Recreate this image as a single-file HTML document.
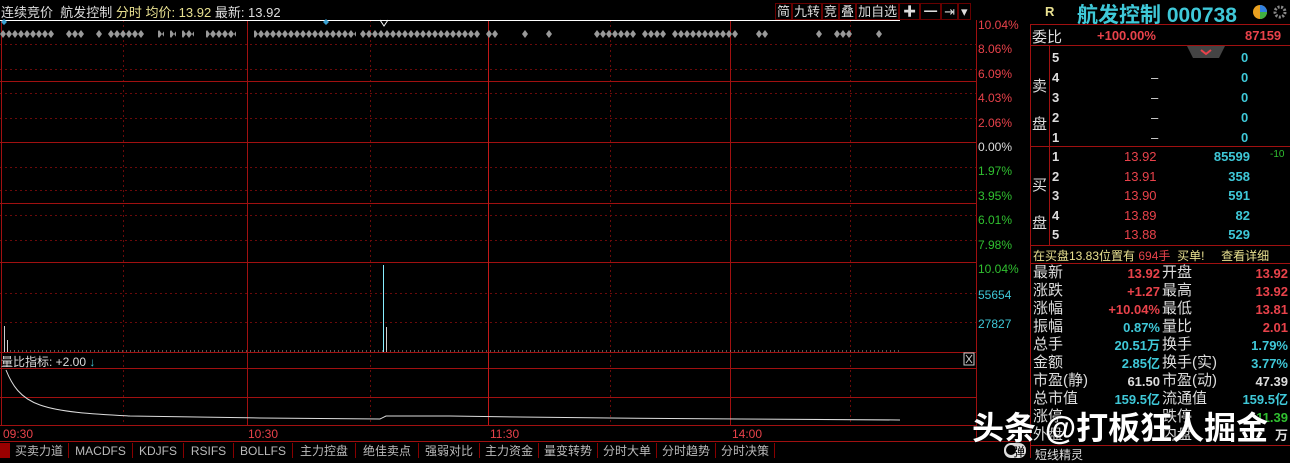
<!DOCTYPE html><html><head><meta charset="utf-8"><style>
body{margin:0;width:1290px;height:458px;background:#000;overflow:hidden;font-family:"Liberation Sans","Noto Sans CJK SC",sans-serif;position:relative}
.a{position:absolute;white-space:nowrap}
.r{color:#e8424a}.c{color:#3fc8d8}.w{color:#ddd}.g{color:#30c030}.y{color:#e8e090}
.tab{position:absolute;top:443px;height:15px;font-size:12px;color:#bbb;border-right:1px solid #800;line-height:16px;text-align:center}
.rp{font-size:13px;position:absolute}
</style></head><body>
<svg class="a" style="left:0;top:0" width="1290" height="458">
<defs><pattern id="dm" x="0" y="30" width="6" height="8" patternUnits="userSpaceOnUse"><path d="M3 0l3 4l-3 4l-3-4z" fill="#999"/></pattern></defs>
<g stroke="#6a0a0a" stroke-width="1">
<line x1="0" y1="44.5" x2="976" y2="44.5" stroke-dasharray="2,3"/>
<line x1="0" y1="69.5" x2="976" y2="69.5" stroke-dasharray="2,3"/>
<line x1="0" y1="93.5" x2="976" y2="93.5" stroke-dasharray="2,3"/>
<line x1="0" y1="118.5" x2="976" y2="118.5" stroke-dasharray="2,3"/>
<line x1="0" y1="167.5" x2="976" y2="167.5" stroke-dasharray="2,3"/>
<line x1="0" y1="190.5" x2="976" y2="190.5" stroke-dasharray="2,3"/>
<line x1="0" y1="215.5" x2="976" y2="215.5" stroke-dasharray="2,3"/>
<line x1="0" y1="240.5" x2="976" y2="240.5" stroke-dasharray="2,3"/>
<line x1="0" y1="293.5" x2="976" y2="293.5" stroke-dasharray="2,3"/>
<line x1="0" y1="322.5" x2="976" y2="322.5" stroke-dasharray="2,3"/>
<line x1="123.5" y1="20" x2="123.5" y2="425" stroke-dasharray="2,3"/>
<line x1="370.5" y1="20" x2="370.5" y2="425" stroke-dasharray="2,3"/>
<line x1="610.5" y1="20" x2="610.5" y2="425" stroke-dasharray="2,3"/>
<line x1="850.5" y1="20" x2="850.5" y2="425" stroke-dasharray="2,3"/>
</g>
<g stroke="#a01010" stroke-width="1">
<line x1="0" y1="81.5" x2="976" y2="81.5"/>
<line x1="0" y1="142.5" x2="976" y2="142.5"/>
<line x1="0" y1="203.5" x2="976" y2="203.5"/>
<line x1="0" y1="262.5" x2="976" y2="262.5"/>
<line x1="0" y1="352.5" x2="976" y2="352.5"/>
<line x1="0" y1="368.5" x2="976" y2="368.5"/>
<line x1="0" y1="397.5" x2="976" y2="397.5"/>
<line x1="0" y1="425.5" x2="976" y2="425.5"/>
<line x1="0" y1="441.5" x2="1030" y2="441.5"/>
<line x1="1.5" y1="20" x2="1.5" y2="425"/>
<line x1="247.5" y1="20" x2="247.5" y2="425"/>
<line x1="730.5" y1="20" x2="730.5" y2="425"/>
<line x1="976.5" y1="20" x2="976.5" y2="441"/>
<line x1="1030.5" y1="24" x2="1030.5" y2="458"/>
<line x1="1030" y1="24.5" x2="1290" y2="24.5"/>
<line x1="1030" y1="45.5" x2="1290" y2="45.5"/>
<line x1="1030" y1="146.5" x2="1290" y2="146.5"/>
<line x1="1030" y1="245.5" x2="1290" y2="245.5"/>
<line x1="1030" y1="263.5" x2="1290" y2="263.5"/>
<line x1="1030" y1="445.5" x2="1290" y2="445.5"/>
<line x1="1049.5" y1="46" x2="1049.5" y2="245"/>
</g>
<line x1="488.5" y1="20" x2="488.5" y2="425" stroke="#c01818"/>
<line x1="0" y1="20.5" x2="900" y2="20.5" stroke="#fff"/>
<path d="M380 20l4 6l4-6" fill="none" stroke="#fff"/>
<path d="M4 19l3 3l-3 3l-3-3zM326 19l3 3l-3 3l-3-3z" fill="#3aa0d0"/>
<g fill="url(#dm)">
<rect x="0" y="30" width="54" height="8"/><rect x="66" y="30" width="18" height="8"/><rect x="96" y="30" width="6" height="8"/><rect x="108" y="30" width="36" height="8"/>
<rect x="158" y="30" width="6" height="8"/><rect x="170" y="30" width="6" height="8"/><rect x="182" y="30" width="12" height="8"/><rect x="206" y="30" width="30" height="8"/>
<rect x="254" y="30" width="102" height="8"/><rect x="360" y="30" width="120" height="8"/><rect x="486" y="30" width="12" height="8"/><rect x="522" y="30" width="6" height="8"/><rect x="546" y="30" width="6" height="8"/>
<rect x="594" y="30" width="42" height="8"/><rect x="642" y="30" width="24" height="8"/><rect x="672" y="30" width="66" height="8"/><rect x="756" y="30" width="12" height="8"/>
<rect x="816" y="30" width="6" height="8"/><rect x="834" y="30" width="18" height="8"/><rect x="876" y="30" width="6" height="8"/>
</g>
<g stroke="#ccc" stroke-width="1">
<line x1="4.5" y1="326" x2="4.5" y2="352"/><line x1="7.5" y1="340" x2="7.5" y2="352"/>
<line x1="383.5" y1="265" x2="383.5" y2="352" stroke="#8ef"/><line x1="386.5" y1="327" x2="386.5" y2="352"/>
</g>
<line x1="10" y1="351" x2="900" y2="351" stroke="#aaa" stroke-dasharray="1,3"/>
<path d="M6 370 C12 385 20 398 40 405 S90 414 130 416 L260 418 L380 419 L386 416 L450 416 L520 417 L610 418 L740 419 L900 420" fill="none" stroke="#ddd"/>
<rect x="964" y="353" width="10" height="12" fill="none" stroke="#ccc"/>
<path d="M966 355l6 8M972 355l-6 8" stroke="#ccc"/>
<path d="M1187 46h38l-6 12h-26z" fill="#444"/>
<path d="M1201 50l5 4l5-4" fill="none" stroke="#e8424a" stroke-width="2"/>
<circle cx="1260" cy="12" r="7" fill="#e9a020"/><path d="M1260 12v-7a7 7 0 0 1 7 7z" fill="#3080e0"/><path d="M1260 12h7a7 7 0 0 1-7 7z" fill="#40b040"/>
<circle cx="1280" cy="12" r="5" fill="none" stroke="#888" stroke-width="3" stroke-dasharray="2,1.5"/>
<rect x="1004" y="443" width="22" height="15" rx="7" fill="#ddd"/><circle cx="1011" cy="450" r="5" fill="#000"/>
<rect x="0" y="443" width="10" height="15" fill="#900"/>
</svg>
<div class="a w" style="left:1px;top:2px;font-size:13px">连续竞价&nbsp; 航发控制 <span class="y">分时 均价: 13.92</span> 最新: 13.92</div>
<div class="a w" style="left:775px;top:1px;font-size:13px;word-spacing:0">
<span style="border:1px solid #600;padding:0 1px">简</span><span style="border:1px solid #600;padding:0 1px">九转</span><span style="border:1px solid #600;padding:0 1px">竞</span><span style="border:1px solid #600;padding:0 1px">叠</span><span style="border:1px solid #600;padding:0 1px">加自选</span><span style="border:1px solid #600;padding:0 3px">✚</span><span style="border:1px solid #600;padding:0 3px">━</span><span style="border:1px solid #600;padding:0 2px">⇥</span><span style="border:1px solid #600;padding:0 2px">▾</span></div>
<div class="a r" style="left:978px;top:13px;font-size:12px;line-height:24.4px">10.04%<br>8.06%<br>6.09%<br>4.03%<br>2.06%<br><span class="w">0.00%</span><br><span class="g">1.97%<br>3.95%<br>6.01%<br>7.98%<br>10.04%</span></div>
<div class="a c" style="left:978px;top:288px;font-size:12px">55654</div>
<div class="a c" style="left:978px;top:317px;font-size:12px">27827</div>
<div class="a w" style="left:1px;top:353px;font-size:12px">量比指标: +2.00 <span class="c">↓</span></div>
<div class="a r" style="left:3px;top:427px;font-size:12px">09:30</div>
<div class="a r" style="left:248px;top:427px;font-size:12px">10:30</div>
<div class="a r" style="left:490px;top:427px;font-size:12px">11:30</div>
<div class="a r" style="left:732px;top:427px;font-size:12px">14:00</div>
<div class="tab" style="left:10px;width:58px">买卖力道</div><div class="tab" style="left:69px;width:63px">MACDFS</div><div class="tab" style="left:133px;width:50px">KDJFS</div><div class="tab" style="left:184px;width:49px">RSIFS</div><div class="tab" style="left:234px;width:58px">BOLLFS</div><div class="tab" style="left:293px;width:62px">主力控盘</div><div class="tab" style="left:356px;width:62px">绝佳卖点</div><div class="tab" style="left:419px;width:60px">强弱对比</div><div class="tab" style="left:480px;width:58px">主力资金</div><div class="tab" style="left:539px;width:58px">量变转势</div><div class="tab" style="left:598px;width:58px">分时大单</div><div class="tab" style="left:657px;width:58px">分时趋势</div><div class="tab" style="left:716px;width:58px">分时决策</div>
<div class="a y" style="left:1045px;top:4px;font-size:13px;font-weight:bold">R</div>
<div class="a c" style="left:1077px;top:-1px;font-size:21px;font-weight:bold">航发控制 000738</div>
<div class="rp w" style="left:1032px;top:26px;font-size:15px">委比</div>
<div class="rp r" style="left:1097px;top:28px;font-weight:bold">+100.00%</div>
<div class="rp r" style="left:1245px;top:28px;font-weight:bold">87159</div>
<div class="rp w" style="left:1032px;top:68px;font-size:15px;line-height:38px">卖<br>盘</div>
<div class="rp w" style="left:1032px;top:167px;font-size:15px;line-height:38px">买<br>盘</div>
<div class="rp w" style="left:1052px;top:48px;line-height:20px;font-weight:bold">5<br>4<br>3<br>2<br>1</div>
<div class="rp w" style="left:1151px;top:48px;line-height:20px">&nbsp;<br>–<br>–<br>–<br>–</div>
<div class="rp c" style="left:1241px;top:48px;line-height:20px;font-weight:bold">0<br>0<br>0<br>0<br>0</div>
<div class="rp w" style="left:1052px;top:147px;line-height:19.5px;font-weight:bold">1<br>2<br>3<br>4<br>5</div>
<div class="rp r" style="left:1124px;top:147px;line-height:19.5px">13.92<br>13.91<br>13.90<br>13.89<br>13.88</div>
<div class="rp c" style="left:1180px;top:147px;line-height:19.5px;text-align:right;width:70px;font-weight:bold">85599<br>358<br>591<br>82<br>529</div>
<div class="rp g" style="left:1270px;top:149px;font-size:10px">-10</div>
<div class="rp y" style="left:1033px;top:247px;font-size:12px">在买盘13.83位置有 <span class="r">694手</span>&nbsp; 买单!&nbsp;&nbsp;&nbsp;&nbsp; 查看详细</div>
<div class="rp w" style="left:1033px;top:264px;font-size:15px;line-height:18px">最新<br>涨跌<br>涨幅<br>振幅<br>总手<br>金额<br>市盈(静)<br>总市值<br>涨停<br>外盘</div>
<div class="rp w" style="left:1162px;top:264px;font-size:15px;line-height:18px">开盘<br>最高<br>最低<br>量比<br>换手<br>换手(实)<br>市盈(动)<br>流通值<br>跌停<br>内盘</div>
<div class="rp" style="left:1060px;width:100px;text-align:right;top:265px;line-height:18px;font-weight:bold"><span class="r">13.92<br>+1.27<br>+10.04%</span><br><span class="c">0.87%<br>20.51万<br>2.85亿</span><br><span class="w">61.50</span><br><span class="c">159.5亿</span></div>
<div class="rp" style="left:1190px;width:98px;text-align:right;top:265px;line-height:18px;font-weight:bold"><span class="r">13.92<br>13.92<br>13.81<br>2.01</span><br><span class="c">1.79%<br>3.77%</span><br><span class="w">47.39</span><br><span class="c">159.5亿</span><br><span class="g">11.39</span><br><span class="w">万</span></div>
<div class="rp w" style="left:1035px;top:446px;font-size:12px">短线精灵</div>
<div class="a" style="left:972px;top:403px;font-size:32px;font-weight:bold;color:#fff;text-shadow:0 0 2px #000">头条 @打板狂人掘金</div>
<div class="a" style="left:1013px;top:443px;font-size:12px;color:#000">弹</div>
</body></html>
